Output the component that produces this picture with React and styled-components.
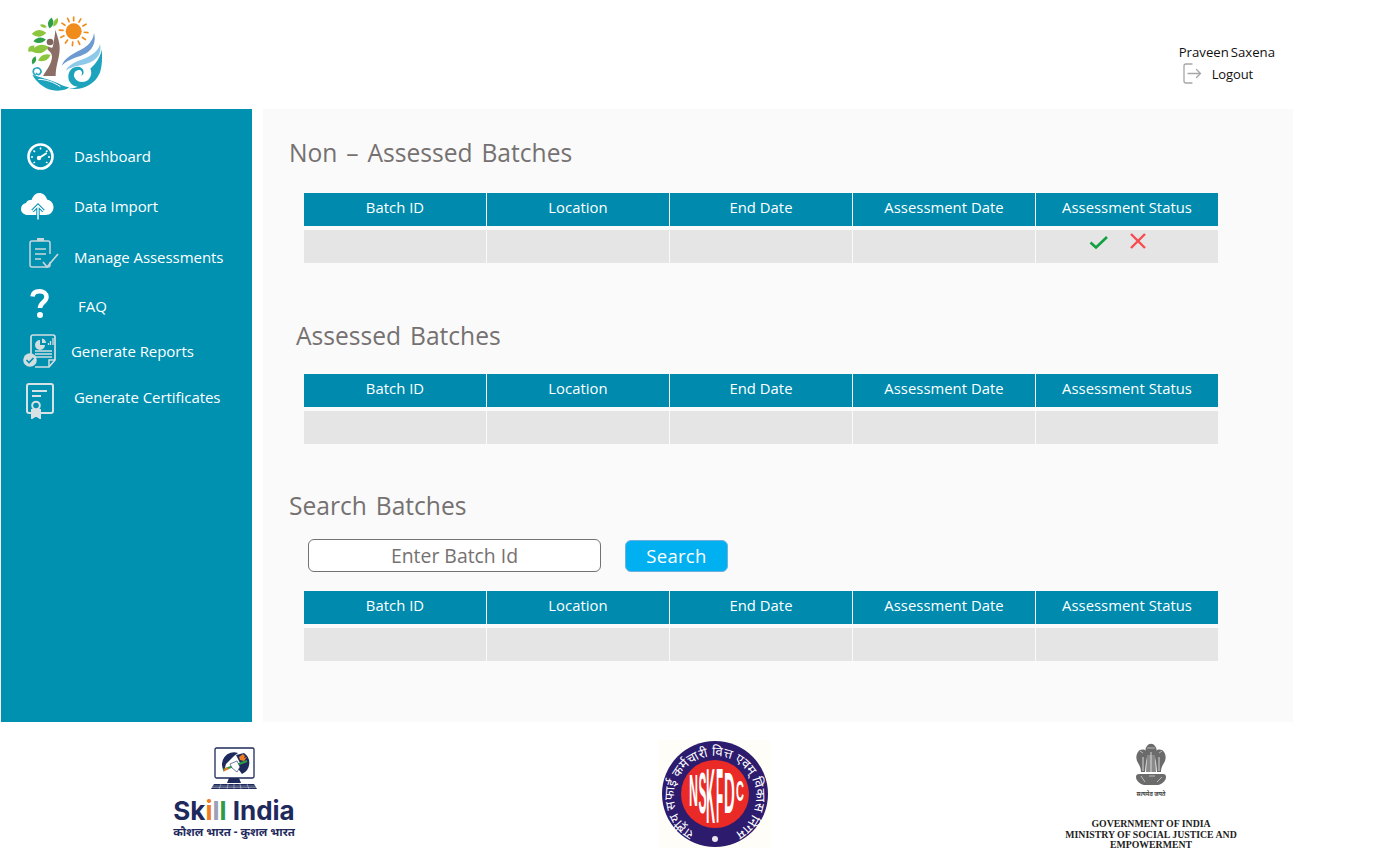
import React from 'react';
import styled, { createGlobalStyle } from 'styled-components';

const GlobalStyle = createGlobalStyle`
  html, body {
    margin: 0;
    padding: 0;
    background: #fff;
    font-family: "Open Sans", "Noto Sans", sans-serif;
  }
`;

const Page = styled.div`
  width: 1376px;
  height: 864px;
  overflow: hidden;
`;

const TopBar = styled.header`
  height: 109px;
  display: flex;
  justify-content: space-between;
  padding: 14px 101px 0 25px;
  box-sizing: border-box;
`;

const UserBox = styled.div`
  padding-top: 30px;
  font-size: 13px;
  color: #111;
`;

const UserName = styled.div`
  line-height: 17px;
  font-size: 13.2px;
  word-spacing: -1.5px;
`;

const LogoutRow = styled.div`
  display: flex;
  align-items: center;
  gap: 10px;
  margin: 2px 0 0 4px;
  line-height: 20px;
  letter-spacing: -0.1px;
`;

const Body = styled.div`
  height: 613px;
  display: flex;
  gap: 11px;
  padding-left: 1px;
`;

const Sidebar = styled.nav`
  width: 251px;
  background: #0090b0;
  padding-top: 22px;
  box-sizing: border-box;
`;

const NavItem = styled.div`
  height: ${(p) => p.$h}px;
  display: flex;
  align-items: center;
  color: #fff;
  font-size: 15px;
  letter-spacing: -0.05px;
`;

const NavIcon = styled.span`
  width: ${(p) => p.$labelAt - 1}px;
  padding-left: ${(p) => p.$iconAt - 1}px;
  padding-top: ${(p) => Math.max(p.$shift, 0) * 2}px;
  padding-bottom: ${(p) => Math.max(-p.$shift, 0) * 2}px;
  box-sizing: border-box;
  display: flex;
  align-items: center;
  svg { display: block; }
`;

const Panel = styled.main`
  width: 1030px;
  background: #fafafa;
  padding-top: 26px;
  box-sizing: border-box;
`;

const Heading = styled.h2`
  margin: ${(p) => p.$top || 0}px 0 ${(p) => p.$bottom}px ${(p) => p.$left}px;
  height: 36px;
  line-height: 36px;
  font-size: 24.6px;
  font-weight: 400;
  color: #767171;
  word-spacing: 2.5px;
`;

const Table = styled.div`
  width: 914px;
  margin-left: 41px;
`;

const Row = styled.div`
  display: grid;
  grid-template-columns: repeat(5, 182px);
  column-gap: 1px;
  height: 33px;
  margin-top: ${(p) => (p.$body ? 4 : 0)}px;
`;

const HeadCell = styled.div`
  background: #008bae;
  color: #fff;
  font-size: 14.8px;
  letter-spacing: 0.05px;
  line-height: 28px;
  text-align: center;
`;

const BodyCell = styled.div`
  background: #e5e5e5;
  display: flex;
  align-items: flex-start;
  justify-content: center;
  gap: 20px;
  padding: 2px 18px 0 0;
  box-sizing: border-box;
`;

const SearchRow = styled.div`
  display: flex;
  align-items: flex-end;
  gap: 24px;
  height: 33px;
  margin: 15px 0 19px 45px;
`;

const SearchInput = styled.div`
  width: 293px;
  height: 33px;
  box-sizing: border-box;
  background: #fff;
  border: 1px solid #767171;
  border-radius: 6px;
  color: #767171;
  font-size: 19.4px;
  line-height: 31px;
  text-align: center;
`;

const SearchButton = styled.div`
  width: 103px;
  height: 32px;
  box-sizing: border-box;
  background: #00b0f0;
  border: 1px solid #6fb0e0;
  border-radius: 6px;
  color: #fff;
  font-size: 18.5px;
  line-height: 29px;
  text-align: center;
  letter-spacing: 0.3px;
`;

const Footer = styled.footer`
  height: 142px;
  display: grid;
  grid-template-columns: 172px 124px 362px 112px 294px 174px;
  grid-template-areas: ". skill . nsk . gov";
`;

const SkillBlock = styled.div`
  grid-area: skill;
  padding-top: 25px;
  display: flex;
  flex-direction: column;
  align-items: center;
  color: #1f2a5c;
`;

const SkillName = styled.div`
  font-family: "Inter", "Liberation Sans", sans-serif;
  font-weight: 700;
  font-size: 26px;
  line-height: 28px;
  margin-top: 2px;
  white-space: nowrap;
`;

const SkillBar = styled.span`
  color: ${(p) => p.$c};
`;

const SkillTag = styled.div`
  font-size: 11.5px;
  font-weight: 700;
  line-height: 14px;
  white-space: nowrap;
`;

const NskBlock = styled.div`
  grid-area: nsk;
  margin-top: 18px;
  height: 108px;
  background: #fffdf8;
  svg { display: block; }
`;

const GovBlock = styled.div`
  grid-area: gov;
  padding-top: 21px;
  display: flex;
  flex-direction: column;
  align-items: center;
  svg { display: block; }
`;

const GovText = styled.div`
  margin-top: 20px;
  font-family: "Liberation Serif", serif;
  font-weight: 700;
  font-size: 9.8px;
  line-height: 10.5px;
  text-align: center;
  color: #222;
  white-space: nowrap;
`;

// [x, y, half length, half width, angle, colour]
const leaves = [
  [42, 58, 22, 10, -5, '#8cc63f'],
  [44, 79, 19, 8, -8, '#2f9e4b'],
  [45, 105, 27, 12, -15, '#8cc63f'],
  [19, 104, 13, 8, -45, '#8cc63f'],
  [58, 131, 21, 9, -25, '#8cc63f'],
  [27, 139, 13, 6, -70, '#2f9e4b'],
  [77, 27, 17, 8, -80, '#2f9e4b'],
  [92, 25, 15, 6, -65, '#8cc63f'],
  [55, 36, 11, 5, 20, '#8cc63f'],
];

const rays = [0, 30, 60, 95, 125, 155, 185, 215, 245, 275, 305, 335];

const Logo = () => (
  <svg width="80" height="78" viewBox="0 0 240 234">
    {rays.map((a) => (
      <path key={a} d="M146 20V9" transform={`rotate(${a} 146 52)`} stroke="#f08c1c" strokeWidth="5" strokeLinecap="round" />
    ))}
    <circle cx="146" cy="52" r="24" fill="#f08c1c" />
    <path d="M91 48c6 18 14 38 13 58-1 28-12 50-12 80H54c10-18 26-36 27-58 0-10-6-15-12-20-4-5-2-12 4-9 5 3 10 4 11-3 2-14 6-30 7-48Z" fill="#8b6f66" />
    <circle cx="75" cy="84" r="10" fill="#7f655e" />
    {leaves.map(([x, y, l, w, a, c]) => (
      <path key={`${x}-${y}`} d={`M${-l} 0Q0 ${-w * 2} ${l} 0Q0 ${w * 2} ${-l} 0Z`} transform={`translate(${x} ${y}) rotate(${a})`} fill={c} />
    ))}
    <path d="M110 155c8-26 40-38 68-54 16-10 26-24 29-44 6 22 0 46-22 60-24 14-54 16-75 38Z" fill="#6d9bd1" />
    <path d="M122 170c10-24 46-30 72-44 16-9 27-20 31-36 5 20-2 38-20 50-26 16-60 12-83 30Z" fill="#8fc9ea" />
    <path d="M128 222c34 10 78-4 96-44 8-20 8-48 6-72-4 24-16 42-34 58 6 12 2 28-10 36-14 8-32 4-38-10-4-12 4-24 16-22 8 2 10 12 4 16 10 2 12-18-2-24-18-6-36 8-36 28 0 16 12 28 28 30-10 4-20 6-30 4Z" fill="#1ea3bd" />
    <path d="M22 182c22 8 46 12 68 22 14 6 28 14 42 16-8 10-34 12-52 8-24-6-46-24-58-46Z" fill="#1ea3bd" />
    <path d="M40 196c22 0 46 8 66 22" fill="none" stroke="#fff" strokeWidth="3" />
    <path d="M32 184c-10-6-10-20 2-22 10-2 18 8 12 16-4 6-12 4-12-2" fill="none" stroke="#2aa7c0" strokeWidth="5" />
  </svg>
);

const LogoutIcon = () => (
  <svg width="19" height="21" viewBox="0 0 19 21" fill="none" stroke="#a6a6a6" strokeWidth="1.3" strokeLinecap="round">
    <path d="M9 1H3a2 2 0 0 0-2 2v15a2 2 0 0 0 2 2h6" />
    <path d="M5 10.5h12.500M13.500 6.500l4 4-4 4" />
  </svg>
);

const DashIcon = () => (
  <svg width="27" height="27" viewBox="0 0 27 27" fill="none" stroke="#fff">
    <circle cx="13.500" cy="13.500" r="12" strokeWidth="2.600" />
    <path d="M13.500 4.500v2M6.500 7.500l1.500 1.500M4 14h2M20.500 7.500 19 9M23 14h-2M6.500 20l1.500-1M20.500 20 19 19" strokeWidth="1.500" />
    <circle cx="12" cy="15" r="2.200" fill="#fff" stroke="none" />
    <path d="M12 15l7-4.500" strokeWidth="2" strokeLinecap="round" />
  </svg>
);

const CloudIcon = () => (
  <svg width="33" height="28" viewBox="0 0 33 28">
    <path d="M7 23C3 23 0 20.500 0 17c0-3 2-5.500 5-6 1-2.500 3-3.500 5.500-3C12 4 14.500 1 18 1c4 0 7 2.500 8 6.500 4 .8 6.500 4 6.500 7.500 0 4.500-3 8-8 8Z" fill="#fff" />
    <path d="M17 27.500V14M11.500 19l5.500-5.500 5.500 5.500" fill="none" stroke="#0090b0" strokeWidth="3.400" />
    <path d="M17 27.500V14M11.500 19l5.500-5.500 5.500 5.500" fill="none" stroke="#fff" strokeWidth="1.400" />
  </svg>
);

const ClipIcon = () => (
  <svg width="30" height="31" viewBox="0 0 30 31" fill="none" stroke="#c9d6da" strokeWidth="1.500">
    <path d="M21 24v3a2 2 0 0 1-2 2H3a2 2 0 0 1-2-2V5a2 2 0 0 1 2-2h16a2 2 0 0 1 2 2v11" />
    <path d="M8 1.500h7" strokeWidth="3" />
    <path d="M6 11h11M6 16h11M6 21h6" />
    <path d="M14 24l4 5 11-13" strokeWidth="1.700" />
  </svg>
);

const QuestionIcon = () => (
  <svg width="19" height="29" viewBox="0 0 19 29" fill="none" stroke="#fff" strokeWidth="4.500">
    <path d="M2.500 7.500C3 4 6 2.300 9.500 2.300c3.800 0 7 2.200 7 5.700 0 5-6.500 5.500-6.500 11" />
    <circle cx="10" cy="26" r="3" fill="#fff" stroke="none" />
  </svg>
);

const ReportIcon = () => (
  <svg width="33" height="35" viewBox="0 0 33 35">
    <path d="M8 20V3a2 2 0 0 1 2-2h20a2 2 0 0 1 2 2v23l-6 7H12" fill="none" stroke="#d2dde0" strokeWidth="1.700" />
    <path d="M26 33v-7h6" fill="none" stroke="#d2dde0" strokeWidth="1.500" />
    <path d="M17 6v5h5a5 5 0 1 1-5-5Z" fill="#d2dde0" />
    <path d="M19 4.500a5 5 0 0 1 4 4.500h-4Z" fill="#d2dde0" />
    <path d="M25.500 11V9M27.500 11V7M30 11V4" stroke="#d2dde0" strokeWidth="1.300" />
    <path d="M12 17h17M12 20h17M12 23h17" stroke="#d2dde0" strokeWidth="1.400" />
    <circle cx="7" cy="26" r="6.800" fill="#d2dde0" />
    <path d="M3.500 26l2.500 2.500 4.500-4.500" fill="none" stroke="#0090b0" strokeWidth="1.600" />
  </svg>
);

const CertIcon = () => (
  <svg width="28" height="36" viewBox="0 0 28 36" fill="none" stroke="#d8e2e4" strokeWidth="2">
    <path d="M5 30H3a2 2 0 0 1-2-2V3a2 2 0 0 1 2-2h22a2 2 0 0 1 2 2v25a2 2 0 0 1-2 2H15" />
    <path d="M6 8h15M6 13h9" />
    <circle cx="10" cy="22.500" r="3.800" />
    <path d="M6 27v8l4-2.500 4 2.500v-8Z" fill="#d8e2e4" />
  </svg>
);

const Tick = () => (
  <svg width="20" height="20" viewBox="0 0 20 20" fill="none" stroke="#10a040" strokeWidth="2.600">
    <path d="M1.500 10.500l5.500 5L18 5" />
  </svg>
);

const Cross = () => (
  <svg width="18" height="18" viewBox="0 0 18 18" fill="none" stroke="#f94a4f" strokeWidth="2.400">
    <path d="M2 2l14 14M16 2 2 16" />
  </svg>
);

const SkillArt = () => (
  <svg width="66" height="48" viewBox="0 0 66 48">
    <rect x="14" y="1" width="39" height="30" rx="1.500" fill="#fff" stroke="#1f2a5c" strokeWidth="1.300" />
    <path d="M43 6a12 12 0 0 1-2 21l-6-8 4-3-4-8Z" fill="#1f2a5c" />
    <path d="M23 24A12 12 0 0 1 37 6l-4 3-8 8Z" fill="#1f2a5c" />
    <path d="M22 23l24-9" stroke="#2e9c45" strokeWidth="2.200" />
    <path d="M22 25l3-5 3 2ZM38 10l4-3 2 2-1 2 3-1-3 4-4-1Z" fill="#ef7d22" />
    <path d="M29 17l7-3 3 6-3 5-5-4Z" fill="#fff" stroke="#1f2a5c" strokeWidth=".6" />
    <path d="M28 31h10l2 5H26Z" fill="#1f2a5c" />
    <path d="M13 37h40l3 5H10Z" fill="#1f2a5c" />
    <path d="M12 39h42M11 40.500h44M20 37l-2 5M27 37l-1 5M33 37v5M39 37l1 5M46 37l2 5" stroke="#fff" strokeWidth=".4" />
  </svg>
);

// letter, x, baseline, x scale, y scale
const nskLetters = [
  ['N', 31, 66, 1.25, 4.35],
  ['S', 40.5, 73, 1.2, 5.8],
  ['K', 48, 83, 1.25, 7.7],
  ['F', 58, 83, 1.15, 7.7],
  ['D', 66, 73, 1.5, 5.8],
  ['C', 78, 61, 1.1, 2.9],
];

const NskArt = () => (
  <svg width="112" height="108" viewBox="0 0 112 108">
    <defs>
      <path id="nskArc" d="M34 91A41 41 0 1 1 80 91" />
    </defs>
    <circle cx="57" cy="54" r="53" fill="#2d1b6e" />
    <circle cx="57" cy="54" r="34" fill="#ea2a26" />
    <text fill="#fff" fontFamily="Noto Sans, Liberation Sans, sans-serif" fontSize="13">
      <textPath href="#nskArc" startOffset="50%" textAnchor="middle">राष्ट्रीय सफाई कर्मचारी वित्त एवम् विकास निगम</textPath>
    </text>
    <g fill="#fff" fontFamily="Liberation Sans, sans-serif" fontWeight="700" fontSize="10">
      {nskLetters.map(([l, x, y, sx, sy]) => (
        <text key={l} transform={`translate(${x} ${y}) scale(${sx} ${sy})`}>{l}</text>
      ))}
    </g>
    <circle cx="57" cy="99" r="3" fill="#e9e6f0" />
  </svg>
);

const Emblem = () => (
  <svg width="36" height="56" viewBox="0 0 36 56">
    <g fill="#6b6b6b">
      <path d="M14 3c2-3 6-3 8 0 2 2 2 6 1 9H13c-1-3-1-7 1-9Z" />
      <path d="M5 9c2-3 6-3 8-1 2 3 1 7 0 11l-1 10H8c0-5-2-7-4-11-1-3-1-6 1-9Z" />
      <path d="M31 9c-2-3-6-3-8-1-2 3-1 7 0 11l1 10h4c0-5 2-7 4-11 1-3 1-6-1-9Z" />
      <path d="M14 12h8l1 17H13Z" fill="#8a8a8a" />
      <path d="M6 31h24c2 0 3 1 3 3 0 3-3 7-8 8H11c-5-1-8-5-8-8 0-2 1-3 3-3Z" />
    </g>
    <path d="M10 14v14M18 9v20M26 14v14" stroke="#d9d9d9" strokeWidth="1" />
    <path d="M7 8l3 2M29 8l-3 2M14 5h8M8 33l4 6M16 33h6M29 34l-5 5" stroke="#bbb" strokeWidth="1" />
    <text x="18" y="53" textAnchor="middle" fontSize="5.500" fontWeight="700" fill="#444" fontFamily="Noto Sans, sans-serif">सत्यमेव जयते</text>
  </svg>
);

const columns = ['Batch ID', 'Location', 'End Date', 'Assessment Date', 'Assessment Status'];

const BatchTable = ({ withActions }) => (
  <Table>
    <Row>
      {columns.map((c) => <HeadCell key={c}>{c}</HeadCell>)}
    </Row>
    <Row $body>
      {columns.map((c, i) => (
        <BodyCell key={c}>
          {withActions && i === 4 && <><Tick /><Cross /></>}
        </BodyCell>
      ))}
    </Row>
  </Table>
);

const navItems = [
  { label: 'Dashboard', h: 50, iconAt: 27, labelAt: 74, shift: 0, Icon: DashIcon },
  { label: 'Data Import', h: 50, iconAt: 21, labelAt: 74, shift: 0, Icon: CloudIcon },
  { label: 'Manage Assessments', h: 52, iconAt: 29, labelAt: 74, shift: -4, Icon: ClipIcon },
  { label: 'FAQ', h: 46, iconAt: 30, labelAt: 78, shift: -3, Icon: QuestionIcon },
  { label: 'Generate Reports', h: 44, iconAt: 23, labelAt: 71, shift: 0, Icon: ReportIcon },
  { label: 'Generate Certificates', h: 48, iconAt: 26, labelAt: 74, shift: 4, Icon: CertIcon },
];

const App = () => (
  <Page>
    <GlobalStyle />
    <TopBar>
      <Logo />
      <UserBox>
        <UserName>Praveen Saxena</UserName>
        <LogoutRow><LogoutIcon />Logout</LogoutRow>
      </UserBox>
    </TopBar>
    <Body>
      <Sidebar>
        {navItems.map(({ label, h, iconAt, labelAt, shift, Icon }) => (
          <NavItem key={label} $h={h}>
            <NavIcon $iconAt={iconAt} $labelAt={labelAt} $shift={shift}><Icon /></NavIcon>
            {label}
          </NavItem>
        ))}
      </Sidebar>
      <Panel>
        <Heading $left={26} $bottom={22}>Non – Assessed Batches</Heading>
        <BatchTable withActions />
        <Heading $top={55} $left={33} $bottom={20}>Assessed Batches</Heading>
        <BatchTable />
        <Heading $top={44} $left={26} $bottom={0}>Search Batches</Heading>
        <SearchRow>
          <SearchInput>Enter Batch Id</SearchInput>
          <SearchButton>Search</SearchButton>
        </SearchRow>
        <BatchTable />
      </Panel>
    </Body>
    <Footer>
      <SkillBlock>
        <SkillArt />
        <SkillName>Sk<SkillBar $c="#ef7d22">i</SkillBar><SkillBar $c="#9aa0b5">l</SkillBar><SkillBar $c="#2e9c45">l</SkillBar> India</SkillName>
        <SkillTag>कौशल भारत - कुशल भारत</SkillTag>
      </SkillBlock>
      <NskBlock><NskArt /></NskBlock>
      <GovBlock>
        <Emblem />
        <GovText>GOVERNMENT OF INDIA<br />MINISTRY OF SOCIAL JUSTICE AND<br />EMPOWERMENT</GovText>
      </GovBlock>
    </Footer>
  </Page>
);

export default App;
